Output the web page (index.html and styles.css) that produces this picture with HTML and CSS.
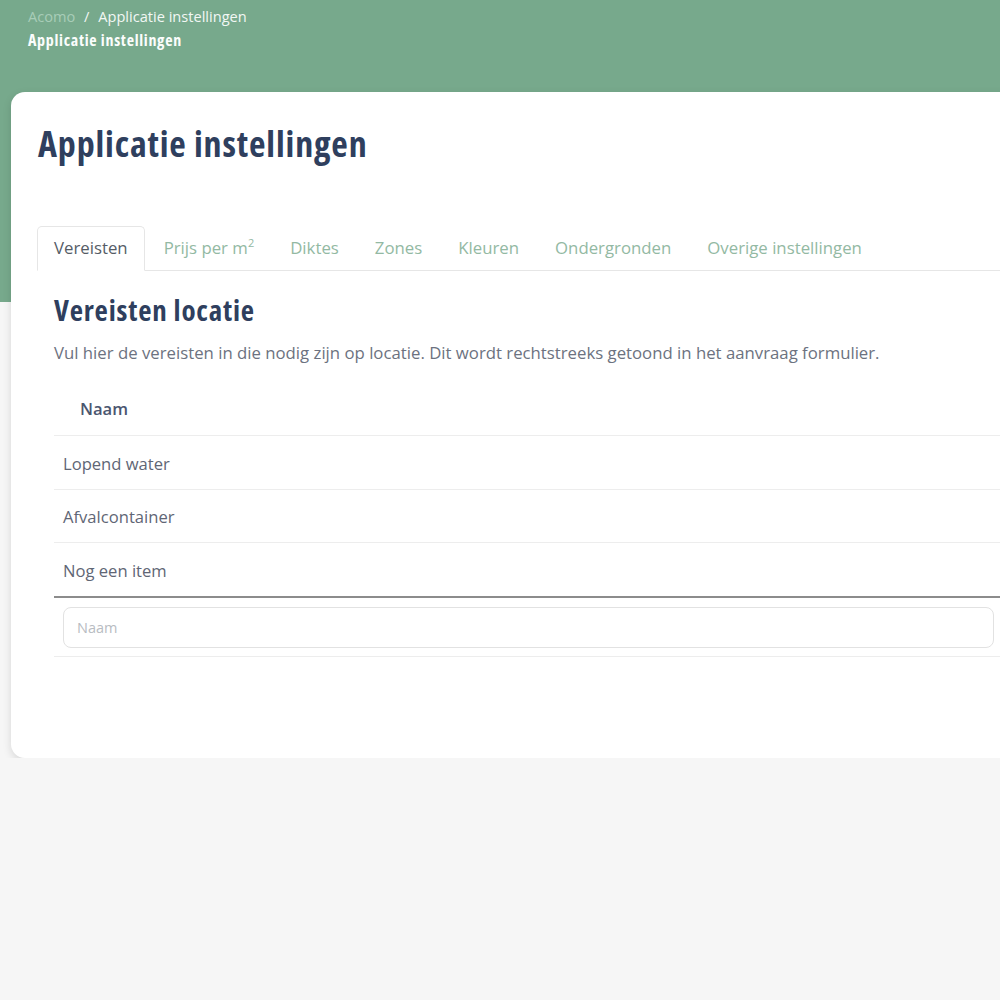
FILE: index.html
```html
<!DOCTYPE html>
<html>
<head>
    <title>Applicatie instellingen</title>
    <link rel="stylesheet" href="styles.css">
</head>
<body>
    <div class="header">
        <div class="crumbs">
            <span class="crumb-root">Acomo</span>
            <span class="crumb-sep">/</span>
            <span>Applicatie instellingen</span>
        </div>
        <div class="header-title">Applicatie instellingen</div>
    </div>

    <div class="card">
        <h1>Applicatie instellingen</h1>

        <ul class="tabs">
            <li class="tab active">Vereisten</li>
            <li class="tab">Prijs per m<sup>2</sup></li>
            <li class="tab">Diktes</li>
            <li class="tab">Zones</li>
            <li class="tab">Kleuren</li>
            <li class="tab">Ondergronden</li>
            <li class="tab">Overige instellingen</li>
        </ul>

        <div class="section">
            <h2>Vereisten locatie</h2>
            <p class="intro">Vul hier de vereisten in die nodig zijn op locatie. Dit wordt rechtstreeks getoond in het aanvraag formulier.</p>

            <table class="list">
                <thead>
                    <tr><th>Naam</th></tr>
                </thead>
                <tbody>
                    <tr><td>Lopend water</td></tr>
                    <tr><td>Afvalcontainer</td></tr>
                    <tr class="last"><td>Nog een item</td></tr>
                    <tr class="new-row">
                        <td><input type="text" placeholder="Naam"></td>
                    </tr>
                </tbody>
            </table>
        </div>
    </div>
</body>
</html>
```

FILE: styles.css
```css
body {
    margin: 0;
    font-family: "Open Sans", "Noto Sans", sans-serif;
    background-color: #f6f6f6;
    overflow: hidden;
    color: #5f6675;
}
.header {
    background-color: #77a98c;
    height: 302px;
    padding: 6px 28px 0;
    box-sizing: border-box;
    margin-bottom: -210px;
}
.crumbs {
    font-size: 14.6px;
    line-height: 20px;
    color: #f2f7f4;
}
.crumb-root {
    color: #a8cdb8;
}
.crumb-sep {
    margin: 0 5px;
}
.header-title {
    font-stretch: 75%;
    font-weight: 700;
    font-size: 16px;
    letter-spacing: 0.7px;
    line-height: 28px;
    color: #fbfdfc;
}
.card {
    background-color: #fff;
    margin: 0 -30px 0 11px;
    border-radius: 14px;
    box-shadow: 0 3px 9px rgba(0, 0, 0, 0.13);
    padding: 30px 27px 101px;
    position: relative;
}
h1 {
    margin: 0 0 61px;
    font-stretch: 75%;
    font-weight: 700;
    font-size: 36px;
    letter-spacing: 0.85px;
    line-height: 43px;
    color: #2f3f5e;
}
.tabs {
    list-style: none;
    margin: 0 0 0 -1px;
    padding: 0;
    display: flex;
    border-bottom: 1px solid #e6e6e6;
}
.tab {
    padding: 9px 16px 10px;
    margin-right: 2px;
    margin-bottom: -1px;
    font-size: 16.8px;
    line-height: 24px;
    color: #93b9a3;
    border: 1px solid transparent;
    border-radius: 5px 5px 0 0;
}
.tab sup {
    font-size: 11px;
    line-height: 0;
}
.tab.active {
    color: #555c66;
    border-color: #e6e6e6;
    border-bottom-color: #fff;
}
.section {
    padding: 0 0 0 16px;
}
h2 {
    margin: 22px 0 15px;
    font-stretch: 75%;
    font-weight: 700;
    font-size: 29px;
    letter-spacing: 0.8px;
    line-height: 34px;
    color: #2f3f5e;
}
.intro {
    margin: 0;
    font-size: 16.75px;
    line-height: 22px;
    color: #6c7280;
}
.list {
    width: 100%;
    margin-top: 19px;
    border-collapse: collapse;
}
.list th {
    text-align: left;
    font-weight: 600;
    font-size: 16.6px;
    line-height: 24px;
    color: #4b5670;
    padding: 14px 26px 14px;
    border-bottom: 1px solid #ededed;
}
.list td {
    font-size: 16.6px;
    line-height: 23px;
    padding: 15.5px 9px 14px;
    border-bottom: 1px solid #ededed;
}
.list tr.last td {
    border-bottom: 2px solid #8c8c8c;
}
.list tr.new-row td {
    padding: 9px 9px 8px;
}
.list input {
    width: 100%;
    box-sizing: border-box;
    height: 41px;
    border: 1px solid #e2e2e2;
    border-radius: 8px;
    padding: 0 13px;
    font-family: "Open Sans", sans-serif;
    font-size: 14.5px;
    outline: none;
}
.list input::placeholder {
    color: #b8bcc2;
}
```
